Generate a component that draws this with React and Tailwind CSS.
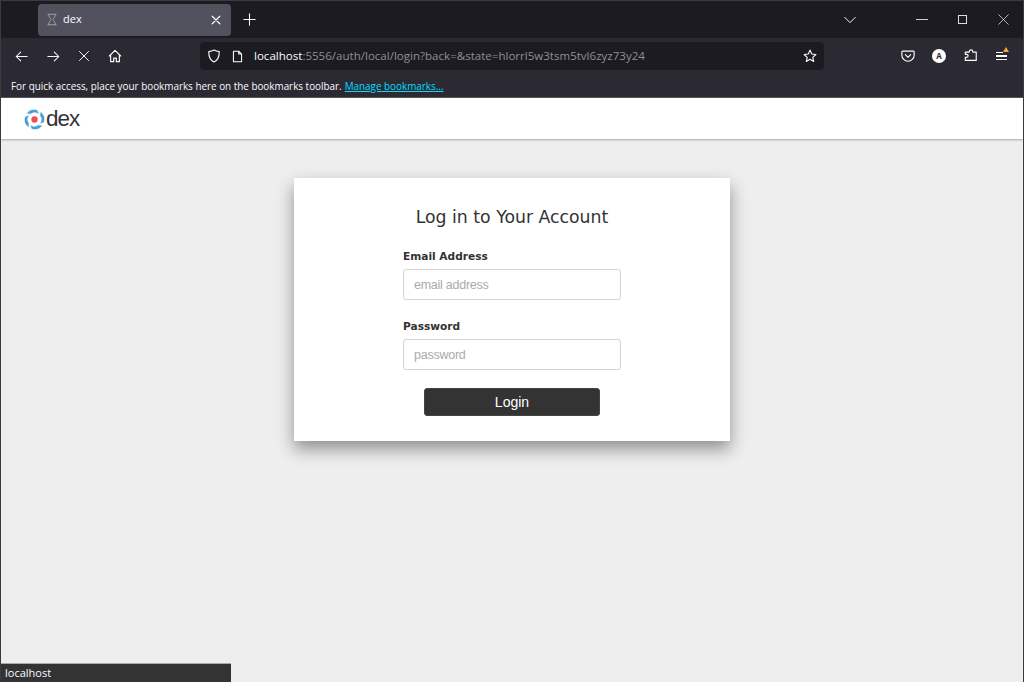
const Icon = ({ className = 'w-4 h-4', children }) => (
  <svg viewBox="0 0 16 16" fill="none" stroke="currentColor" strokeWidth="1.3" strokeLinecap="round" strokeLinejoin="round" className={className}>
    {children}
  </svg>
);

const DexLogo = () => (
  <svg viewBox="0 0 24 24" className="w-[21px] h-[21px]">
    {[0, 90, 180, 270].map((deg) => (
      <path
        key={deg}
        fill="#449fd8"
        stroke="#fff"
        strokeWidth="0.8"
        transform={`rotate(${deg} 12 12)`}
        d="M2.600 5.400A11.500 11.500 0 0 1 15.550 1.060L17.300 6.700A7.500 7.500 0 0 0 7.700 5.860Z"
      />
    ))}
    <circle cx="12" cy="12" r="3.600" fill="#ef4b5c" />
  </svg>
);

const Field = ({ label, placeholder, type = 'text' }) => (
  <div>
    <label className="block mb-[5px] font-['DejaVu_Sans',sans-serif] text-[10.600px] leading-[16px] font-bold text-[#333]">{label}</label>
    <input
      type={type}
      placeholder={placeholder}
      className="block w-[218px] h-[31px] px-[10px] bg-white border border-[#d4d4d4] rounded-[3px] font-['Liberation_Sans',sans-serif] text-[12.500px] tracking-[-0.25px] text-[#333] placeholder:text-[#aaa] outline-none"
    />
  </div>
);

export default function App() {
  return (
    <div className="relative h-[682px] w-[1024px] overflow-hidden flex flex-col border-x border-[#3a3a40] bg-[#eee] font-['Open_Sans',sans-serif]">
      {/* tab strip */}
      <div className="h-[38px] shrink-0 flex items-center bg-[#1c1b22] text-[#fbfbfe] border-t border-[#3a3a40]">
        <div className="ml-[37px] w-[193px] h-[32px] rounded-[4px] bg-[#52525e] flex items-center pl-[8px] pr-[10px]">
          <svg viewBox="0 0 16 16" fill="none" stroke="#a5a5ad" strokeWidth="1.200" className="w-[12px] h-[15px]">
            <path d="M2 1h12M2 15h12M3.500 1c0 4 3 5.500 3 7s-3 3-3 7M12.500 1c0 4-3 5.500-3 7s3 3 3 7" />
          </svg>
          <span className="ml-[5px] text-[11px] flex-1 text-[#fbfbfe]">dex</span>
          <Icon className="w-[10px] h-[10px]"><path d="M2 2l12 12M14 2L2 14" strokeWidth="2" /></Icon>
        </div>
        <Icon className="ml-[12px] w-[13px] h-[13px]"><path d="M8 1v14M1 8h14" /></Icon>
        <div className="flex-1" />
        <Icon className="w-[12px] h-[12px] mr-[60px]"><path d="M1 4.500l7 7 7-7" /></Icon>
        <div className="w-[12px] h-px bg-[#ccc] mr-[30px]" />
        <div className="w-[9px] h-[9px] border border-[#ddd] mr-[31px]" />
        <Icon className="w-[11px] h-[11px] mr-[14px]"><path d="M1 1l14 14M15 1L1 15" strokeWidth="1" /></Icon>
      </div>

      {/* address toolbar */}
      <div className="h-[36px] shrink-0 flex items-center bg-[#2b2a33] text-[#fbfbfe]">
        <Icon className="ml-[14px] w-[13px] h-[13px]"><path d="M15 8H1.500M7 2.500L1.500 8 7 13.500" /></Icon>
        <Icon className="ml-[19px] w-[13px] h-[13px]"><path d="M1 8h13.500M9 2.500L14.500 8 9 13.500" /></Icon>
        <Icon className="ml-[18px] w-[12px] h-[12px]"><path d="M2 2l12 12M14 2L2 14" /></Icon>
        <Icon className="ml-[18px] w-[14px] h-[14px]"><path d="M1.500 8L8 1.500 14.500 8M3 7v7.500h3.500v-4h3v4H13V7" /></Icon>
        <div className="ml-[78px] w-[624px] h-[28px] rounded-[4px] bg-[#1c1b22] flex items-center pl-[7px] pr-[7px]">
          <Icon className="w-[14px] h-[14px]"><path d="M8 1.200c2 1.200 4 1.600 6 1.800 0 5-1 9.500-6 11.800C3 12.500 2 8 2 3c2-.2 4-.6 6-1.800z" /></Icon>
          <Icon className="ml-[10px] w-[13px] h-[13px]"><path d="M3 1.500h6.500L13 5v9.500H3zM9.500 1.500V5H13" /></Icon>
          <span className="ml-[10px] text-[11.560px] whitespace-nowrap">
            <span className="text-[#fbfbfe]">localhost</span>
            <span className="text-[#8f8f94]">:5556/auth/local/login?back=&amp;state=hlorrl5w3tsm5tvl6zyz73y24</span>
          </span>
          <div className="flex-1" />
          <Icon className="w-[14px] h-[14px]"><path d="M8 1.300l2 4.400 4.700.6-3.500 3.200 1 4.700L8 11.800l-4.200 2.400 1-4.700L1.300 6.300 6 5.700z" /></Icon>
        </div>
        <Icon className="ml-[77px] w-[14px] h-[14px]"><path d="M2 2.500h12a1 1 0 0 1 1 1V7a7 7 0 0 1-14 0V3.500a1 1 0 0 1 1-1zM5 6.500l3 3 3-3" /></Icon>
        <div className="ml-[17px] w-[14px] h-[14px] rounded-full bg-white text-[#2b2a33] flex items-center justify-center text-[8px] font-bold">A</div>
        <Icon className="ml-[18px] w-[14px] h-[14px]"><path d="M6 3.500V3a2 2 0 0 1 4 0v.5h4v9.500H1.500V9.500H3a1.700 1.700 0 0 0 0-3.400H1.500V3.500z" /></Icon>
        <div className="relative ml-[18px] mr-[14px] w-[11px] flex flex-col gap-[2px]">
          <div className="h-[1.500px] w-[7px] bg-[#fbfbfe]" />
          <div className="h-[1.500px] bg-[#fbfbfe]" />
          <div className="h-[1.500px] bg-[#fbfbfe]" />
          <div className="absolute -top-[5px] -right-[2px] w-0 h-0 border-x-[3.500px] border-x-transparent border-b-[5px] border-b-[#ffa436]" />
        </div>
      </div>

      {/* bookmarks hint */}
      <div className="h-[24px] shrink-0 flex items-center pl-[10px] pt-[1px] bg-[#2b2a33] text-[#fbfbfe] text-[9.900px] border-b border-[#55555c]">
        For quick access, place your bookmarks here on the bookmarks toolbar.
        <a className="ml-[3px] text-[#00ddff] underline">Manage bookmarks...</a>
      </div>

      {/* dex header */}
      <div className="h-[41px] shrink-0 bg-white flex items-center pl-[23px] pt-[1px] shadow-[0_1px_2px_rgba(0,0,0,0.3)]">
        <DexLogo />
        <span className="ml-[1px] font-['Liberation_Sans',sans-serif] text-[22.500px] tracking-[-1px] leading-none text-[#333]">dex</span>
      </div>

      {/* login card */}
      <div className="flex-1 flex justify-center items-start pt-[39px]">
        <div className="w-[436px] h-[263px] bg-white shadow-[0_8px_16px_rgba(0,0,0,0.4)] flex flex-col items-center pt-[27px]">
          <h2 className="font-['DejaVu_Sans',sans-serif] text-[17.300px] leading-[25px] text-[#333]">Log in to Your Account</h2>
          <form className="mt-[18px] w-[218px] flex flex-col">
            <div className="flex flex-col gap-[18px]">
              <Field label="Email Address" placeholder="email address" />
              <Field label="Password" placeholder="password" type="password" />
            </div>
            <button type="button" className="mt-[18px] self-center w-[176px] h-[28px] rounded-[3px] bg-[#333] border border-[#444] text-white font-['Liberation_Sans',sans-serif] text-[14px]">Login</button>
          </form>
        </div>
      </div>

      {/* link status overlay */}
      <div className="absolute left-0 bottom-0 w-[230px] h-[19px] bg-[#333336] border-t border-[#aaa] pl-[4px] text-[11px] leading-[18px] text-[#fbfbfe]">localhost</div>
    </div>
  );
}
